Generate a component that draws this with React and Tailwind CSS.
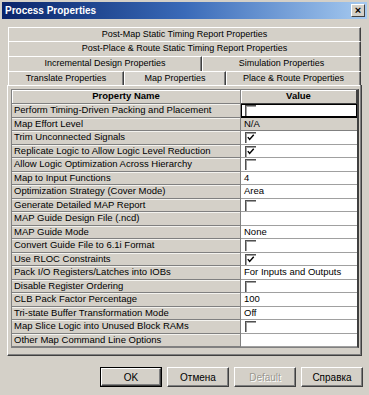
import React from "react";

const rows = [
  ["Perform Timing-Driven Packing and Placement", { type: "check", on: false, focus: true }],
  ["Map Effort Level", { type: "gray", text: "N/A" }],
  ["Trim Unconnected Signals", { type: "check", on: true }],
  ["Replicate Logic to Allow Logic Level Reduction", { type: "check", on: true }],
  ["Allow Logic Optimization Across Hierarchy", { type: "check", on: false }],
  ["Map to Input Functions", { type: "text", text: "4" }],
  ["Optimization Strategy (Cover Mode)", { type: "text", text: "Area" }],
  ["Generate Detailed MAP Report", { type: "check", on: false }],
  ["MAP Guide Design File (.ncd)", { type: "text", text: "" }],
  ["MAP Guide Mode", { type: "text", text: "None" }],
  ["Convert Guide File to 6.1i Format", { type: "check", on: false }],
  ["Use RLOC Constraints", { type: "check", on: true }],
  ["Pack I/O Registers/Latches into IOBs", { type: "text", text: "For Inputs and Outputs" }],
  ["Disable Register Ordering", { type: "check", on: false }],
  ["CLB Pack Factor Percentage", { type: "text", text: "100" }],
  ["Tri-state Buffer Transformation Mode", { type: "text", text: "Off" }],
  ["Map Slice Logic into Unused Block RAMs", { type: "check", on: false }],
  ["Other Map Command Line Options", { type: "text", text: "" }],
];

const CheckBox = ({ on }) => (
  <div className="relative w-[11px] h-[11px] mt-[1px] ml-[4px] bg-white border-t border-l border-[#505050] shadow-[inset_1px_1px_0_#a0a0a0]">
    {on && (
      <svg viewBox="0 0 11 11" className="absolute left-0 top-0 w-[10px] h-[10px]">
        <path d="M2 4.5 L4 7 L8.5 2" stroke="#000" strokeWidth="1.6" fill="none" />
      </svg>
    )}
  </div>
);

const Tab = ({ label, w, active }) => (
  <div
    className={`h-full flex items-center justify-center border-t border-l border-white border-r border-r-[#404040] shadow-[inset_-1px_0_0_#808080] text-[9px] text-black whitespace-nowrap ${
      active ? "bg-[#d8d5cf]" : "bg-[#d4d0c8]"
    } ${w}`}
  >
    {label}
  </div>
);

const Btn = ({ children, primary, disabled }) => (
  <div
    className={`w-[62px] h-[20px] flex items-center justify-center text-[10px] ${
      primary ? "border border-black" : ""
    }`}
  >
    <div className="w-full h-full flex items-center justify-center border-t border-l border-white border-r border-b border-r-[#404040] border-b-[#404040] shadow-[inset_-1px_-1px_0_#808080]">
      <span
        className={
          disabled
            ? "text-[#9a9890] [text-shadow:1px_1px_0_#fff]"
            : "text-black"
        }
      >
        {children}
      </span>
    </div>
  </div>
);

export default function App() {
  return (
    <div className="w-[369px] h-[395px] overflow-hidden bg-[#d4d0c8] p-[2px] font-['Liberation_Sans',Arial,sans-serif]">
      <div className="h-[17px] flex items-center justify-between pl-[3px] pr-[2px] bg-linear-to-r from-[#0a246a] via-[#3a6ab8] to-[#a6caf0]">
        <span className="text-white font-bold text-[10px]">Process Properties</span>
        <div className="w-[14px] h-[13px] bg-[#d4d0c8] flex items-center justify-center border-t border-l border-white border-r border-b border-r-[#404040] border-b-[#404040]">
          <span className="text-black font-bold text-[11px] leading-none">×</span>
        </div>
      </div>

      <div className="mt-[8px] mx-[6px] flex flex-col">
        <div className="flex h-[14px]">
          <Tab label="Post-Map Static Timing Report Properties" w="flex-1" />
        </div>
        <div className="flex h-[15px]">
          <Tab label="Post-Place & Route Static Timing Report Properties" w="flex-1" />
        </div>
        <div className="flex h-[15px]">
          <Tab label="Incremental Design Properties" w="w-[194px]" />
          <Tab label="Simulation Properties" w="flex-1" />
        </div>
        <div className="flex h-[14px]">
          <Tab label="Translate Properties" w="w-[116px]" />
          <Tab label="Map Properties" w="w-[102px]" active />
          <Tab label="Place & Route Properties" w="flex-1" />
        </div>
      </div>

      <div className="mx-[5px] h-[271px] border-l border-white border-r border-r-[#404040] border-b border-b-[#404040] shadow-[inset_-1px_-1px_0_#808080,inset_0_1px_0_#fff] pl-[3px] pt-[4px]">
        <div className="w-[348px] border-t border-l border-[#808080] border-r-2 border-r-[#404040] border-b border-b-[#808080] bg-[#d4d0c8]">
          <div className="flex h-[14px]">
            <div className="w-[229px] flex items-center justify-center font-bold text-[9.5px] border-r border-b border-[#808080] shadow-[inset_1px_1px_0_#fff]">
              Property Name
            </div>
            <div className="w-[116px] flex items-center justify-center font-bold text-[9.5px] border-r border-b border-[#404040] shadow-[inset_1px_1px_0_#fff]">
              Value
            </div>
          </div>
          {rows.map(([name, v], i) => (
            <div key={i} className="flex h-[13.5px]">
              <div className="w-[229px] pl-[2px] flex items-center text-[9.5px] text-black whitespace-nowrap overflow-hidden border-r border-b border-[#808080] shadow-[inset_0_1px_0_#f4f3ef]">
                {name}
              </div>
              <div
                className={`w-[116px] flex items-center text-[9.5px] text-black whitespace-nowrap overflow-hidden border-b ${
                  v.type === "gray" ? "bg-[#d4d0c8] border-[#808080]" : "bg-white border-[#a0a0a0]"
                } ${v.focus ? "outline outline-1 outline-black -outline-offset-1 shadow-[inset_-1px_-1px_0_#000]" : ""}`}
              >
                {v.type === "check" ? (
                  <CheckBox on={v.on} />
                ) : (
                  <span className="pl-[3px]">{v.text}</span>
                )}
              </div>
            </div>
          ))}
        </div>
      </div>

      <div className="mt-[11px] flex justify-end gap-[5px] pr-[4px]">
        <Btn primary>OK</Btn>
        <Btn>Отмена</Btn>
        <Btn disabled>Default</Btn>
        <Btn>Справка</Btn>
      </div>
    </div>
  );
}
